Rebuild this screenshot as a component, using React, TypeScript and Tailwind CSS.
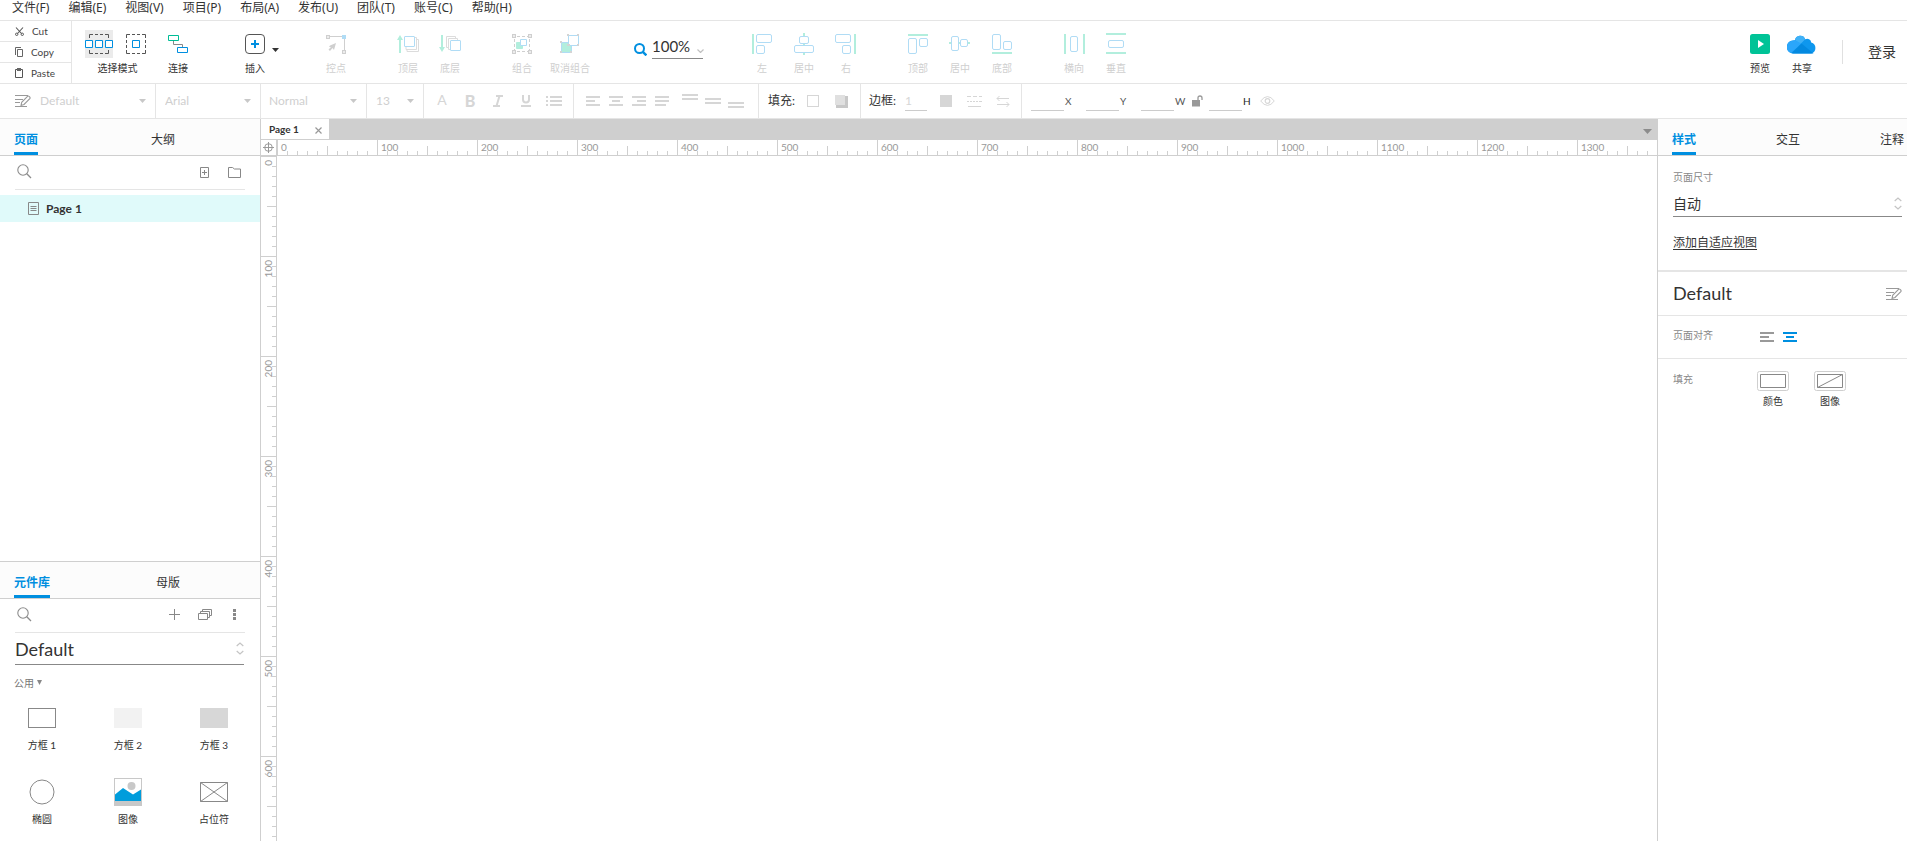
import { useState } from "react";
import type { ReactNode } from "react";

const menus = ["文件(F)", "编辑(E)", "视图(V)", "项目(P)", "布局(A)", "发布(U)", "团队(T)", "账号(C)", "帮助(H)"];

const range = (n: number) => Array.from({ length: n }, (_, i) => i);

function Icon({ w, h, className = "", children }: { w: number; h: number; className?: string; children: ReactNode }) {
  return (
    <svg width={w} height={h} viewBox={`0 0 ${w} ${h}`} fill="none" className={`shrink-0 ${className}`} aria-hidden="true">
      {children}
    </svg>
  );
}

/* ---------- shared icons ---------- */

function Caret({ className = "text-[#c8c8c8]" }: { className?: string }) {
  return (
    <Icon w={7} h={4} className={className}>
      <path d="M0 0h7L3.5 4z" fill="currentColor" />
    </Icon>
  );
}

function UpDown() {
  return (
    <Icon w={8} h={13} className="text-[#c4c4c4]">
      <path d="M.7 4 4 1l3.3 3M.7 9 4 12l3.3-3" stroke="currentColor" strokeWidth="1.2" />
    </Icon>
  );
}

function SearchIcon() {
  return (
    <Icon w={15} h={15} className="text-[#8c8c8c]">
      <circle cx="6" cy="6" r="5.2" stroke="currentColor" strokeWidth="1.1" />
      <path d="m9.8 9.8 4.2 4.2" stroke="currentColor" strokeWidth="1.3" />
    </Icon>
  );
}

function StyleIcon({ className }: { className: string }) {
  return (
    <Icon w={16} h={14} className={className}>
      <path d="M0 1.5h13M0 5.500h8M0 8.500h5M0 12.500h12" stroke="currentColor" />
      <path d="m6 11.500.7-3.200L12.500 2.400q.8-.7 1.600 0l.7.7q.6.8 0 1.600L9 10.500z" stroke="currentColor" strokeWidth="1.100" fill="#fff" />
    </Icon>
  );
}

function AlignIcon({ kind, className = "" }: { kind: "left" | "center" | "right" | "justify"; className?: string }) {
  const mid = { left: "M0 5h9", center: "M3 5h8", right: "M5 5h9", justify: "M0 5h14" }[kind];
  const last = kind === "justify" ? "M0 9h11" : "M0 9h14";
  return (
    <Icon w={14} h={10} className={className}>
      <path d={`M0 1h14${mid}${last}`} stroke="currentColor" strokeWidth="2" />
    </Icon>
  );
}

/* ---------- main toolbar ---------- */

function Tool({ label, wide = false, active = false, children }: { label: string; wide?: boolean; active?: boolean; children: ReactNode }) {
  return (
    <button type="button" className={`flex shrink-0 flex-col items-center gap-1 ${wide ? "w-[54px]" : "w-[42px]"} ${active ? "text-[#333]" : "text-[#cfcfcf]"}`}>
      <span className="flex h-7 items-center justify-center">{children}</span>
      <span className="text-[10px] leading-3 whitespace-nowrap">{label}</span>
    </button>
  );
}

const blue = "#b0dcf5";
const green = "#b2eedd";

function Handle({ x, y }: { x: number; y: number }) {
  return <rect x={x + 0.5} y={y + 0.5} width="3" height="3" stroke="#cfcfcf" fill="#ececec" />;
}

function ClipboardColumn() {
  const row = "flex h-[21px] items-center gap-2 pl-[15px] text-[10px] text-[#444] last:h-5";
  return (
    <div className="flex w-[72px] shrink-0 flex-col divide-y divide-[#e5e5e5] border-r border-[#e5e5e5]">
      <button type="button" className={row}>
        <Icon w={9} h={9}>
          <path d="m1 .5 5.500 6M8 .5 2.500 6.500" stroke="#555" strokeWidth="1.1" />
          <circle cx="1.700" cy="7.300" r="1.200" stroke="#555" />
          <circle cx="7.300" cy="7.300" r="1.200" stroke="#555" />
        </Icon>
        Cut
      </button>
      <button type="button" className={row}>
        <Icon w={8} h={10}>
          <path d="M2.500 2.500h5v7h-5zM.5 8V.5H6" stroke="#666" />
        </Icon>
        Copy
      </button>
      <button type="button" className={row}>
        <Icon w={8} h={10}>
          <path d="M.5 1.500h7v8h-7z" stroke="#555" />
          <path d="M2 0h4v3H2z" fill="#666" />
        </Icon>
        Paste
      </button>
    </div>
  );
}

function Toolbar() {
  return (
    <div className="flex shrink-0 border-b border-[#e5e5e5]">
      <ClipboardColumn />
      <div className="flex min-w-0 flex-1 items-start pt-[9px]">
        <div className="flex w-[85px] flex-col items-center gap-1 pl-[6px]">
          <div className="flex gap-[9px]">
            <button type="button" aria-label="相交选择" className="flex h-7 w-7 items-center justify-center bg-[#ebebeb]">
              <Icon w={28} h={28}>
                <path d="M4.500 8V4.500H8m2 0h3m2 0h3m2 0h3.500V8M4.500 20v3.500H8m2 0h3m2 0h3m2 0h3.500V20" stroke="#555" />
                <path d="M.5 10.500h7v7h-7zM10.500 10.500h7v7h-7zM20.500 10.500h7v7h-7z" stroke="#008fe0" fill="#fff" />
              </Icon>
            </button>
            <button type="button" aria-label="包含选择" className="flex h-7 w-7 items-center justify-center">
              <Icon w={20} h={20}>
                <path d="M.5 4V.5H4m2 0h3m2 0h3m2 0h3.500V4m0 2v3m0 2v3m0 2v3.500H16m-2 0h-3m-2 0H6m-2 0H.5V16m0-2v-3m0-2V6" stroke="#555" />
                <path d="M6.500 6.500h7v7h-7z" stroke="#008fe0" />
              </Icon>
            </button>
          </div>
          <span className="text-[10px] leading-3 text-[#333]">选择模式</span>
        </div>
        <Tool label="连接" active>
          <Icon w={20} h={20}>
            <path d="M5.500 7v3.500h9V13" stroke="#888" />
            <path d="M.5 1.500h10v5H.5z" stroke="#00bd96" />
            <path d="M9.500 13.500h10v5h-10z" stroke="#008fe0" />
          </Icon>
        </Tool>
        <div className="ml-[35px] flex w-[81px] text-[#333]">
          <Tool label="插入" active>
            <Icon w={20} h={20}>
              <rect x=".5" y=".5" width="19" height="19" rx="3.500" stroke="#555" />
              <path d="M10 6v8M6 10h8" stroke="#008fe0" strokeWidth="2" />
            </Icon>
          </Tool>
          <span className="-ml-1 pt-[18px]">
            <Caret className="text-[#333]" />
          </span>
        </div>
        <Tool label="控点">
          <Icon w={20} h={20}>
            <path d="M4 2.500h12M18.500 5v11" stroke="#cfcfcf" />
            <Handle x={0} y={1} />
            <path d="M16 1h4v4h-4z" fill={blue} />
            <Handle x={16} y={16} />
            <path d="m3 13 1-1.500L10 9 8 16l-1.500-2L4 17l-1.500-1.500L5 13z" fill="#cfcfcf" />
          </Icon>
        </Tool>
        <div className="ml-[30px] flex">
          <Tool label="顶层">
            <Icon w={22} h={20}>
              <path d="M3 19V4" stroke={green} strokeWidth="2" />
              <path d="M0 6 3 1l3 5z" fill={green} />
              <path d="M19 5.500h2.500v12H10V15M17 3.500h2.500v12H9V13" stroke="#dcdcdc" />
              <rect x="7.500" y="2.500" width="10" height="10" rx=".5" stroke={blue} fill="#fff" />
            </Icon>
          </Tool>
          <Tool label="底层">
            <Icon w={22} h={20}>
              <path d="M3 1v15" stroke={green} strokeWidth="2" />
              <path d="m0 13 3 5 3-5z" fill={green} />
              <path d="M9 13.500H7.500v-11h9V4M11 15.500H9.500v-11h9V6" stroke="#dcdcdc" />
              <rect x="11.500" y="6.500" width="10" height="10" rx=".5" stroke={blue} fill="#fff" />
            </Icon>
          </Tool>
        </div>
        <div className="ml-[30px] flex">
          <Tool label="组合">
            <Icon w={20} h={20}>
              <path d="M5 2.500h3m2 0h3m2 0h1M5 17.500h3m2 0h3m2 0h1M2.500 5v3m0 2v3m0 2v1M17.500 5v3m0 2v3m0 2v1" stroke="#cfcfcf" />
              <path d="M4.500 8.500h6v6h-6z" fill={green} stroke={green} />
              <path d="M8.500 5.500h6v6h-6z" fill="#fff" stroke={blue} />
              <Handle x={0} y={0} />
              <Handle x={16} y={0} />
              <Handle x={0} y={16} />
              <Handle x={16} y={16} />
            </Icon>
          </Tool>
          <Tool label="取消组合" wide>
            <Icon w={20} h={20}>
              <path d="M1.500 8.500h10v10h-10z" fill={green} stroke={blue} />
              <path d="M8.500 1.500h10v10h-10z" fill="#fff" stroke={blue} />
              <path d="M7 0h2v2H7zM17 0h2v2h-2zM17 10h2v2h-2zM7 10h3v2H7zM0 7h2v2H0zM0 17h2v2H0zM10 17h2v2h-2z" fill="#d4d4d4" />
            </Icon>
          </Tool>
        </div>
        <div className="ml-[37px] flex w-[107px] items-end gap-[5px] pt-[5px]">
          <Icon w={13} h={13} className="mb-[3px]">
            <circle cx="5.500" cy="5.500" r="4.500" stroke="#008fe0" strokeWidth="2" />
            <path d="m8.800 8.800 3.600 3.600" stroke="#008fe0" strokeWidth="2.400" />
          </Icon>
          <label className="flex h-6 w-[51px] items-center border-b border-[#888]">
            <input aria-label="缩放" defaultValue="100%" className="h-5 w-[45px] bg-transparent text-[15px] text-[#333] outline-none" />
            <Icon w={7} h={4} className="mt-2">
              <path d="m.5.5 3 3 3-3" stroke="#c0c0c0" strokeWidth="1.200" />
            </Icon>
          </label>
        </div>
        <div className="flex">
          <Tool label="左">
            <Icon w={20} h={20}>
              <path d="M1 0v20" stroke={green} strokeWidth="2" />
              <rect x="4.500" y=".5" width="15" height="8" rx="1.500" stroke={blue} />
              <rect x="4.500" y="11.500" width="8" height="8" rx="1.500" stroke={blue} />
            </Icon>
          </Tool>
          <Tool label="居中">
            <Icon w={20} h={22}>
              <path d="M10 0v3m0 7v2m0 8v2" stroke={green} strokeWidth="2" />
              <rect x="5.500" y="3.500" width="9" height="7" rx="1.500" stroke={blue} />
              <rect x=".5" y="12.500" width="19" height="7" rx="1.500" stroke={blue} />
            </Icon>
          </Tool>
          <Tool label="右">
            <Icon w={22} h={20}>
              <path d="M20 0v20" stroke={green} strokeWidth="2" />
              <rect x=".5" y=".5" width="15" height="8" rx="1.500" stroke={blue} />
              <rect x="7.500" y="11.500" width="8" height="8" rx="1.500" stroke={blue} />
            </Icon>
          </Tool>
        </div>
        <div className="ml-[30px] flex">
          <Tool label="顶部">
            <Icon w={20} h={20}>
              <path d="M0 1h20" stroke={green} strokeWidth="2" />
              <rect x=".5" y="4.500" width="8" height="15" rx="1.500" stroke={blue} />
              <rect x="11.500" y="4.500" width="8" height="8" rx="1.500" stroke={blue} />
            </Icon>
          </Tool>
          <Tool label="居中">
            <Icon w={22} h={20}>
              <path d="M0 9h3m7 0h2m7 0h2" stroke={green} strokeWidth="2" />
              <rect x="2.500" y="2.500" width="7" height="14" rx="1.500" stroke={blue} />
              <rect x="11.500" y="5.500" width="7" height="7" rx="1.500" stroke={blue} />
            </Icon>
          </Tool>
          <Tool label="底部">
            <Icon w={20} h={20}>
              <path d="M0 19h20" stroke={green} strokeWidth="2" />
              <rect x=".5" y=".5" width="8" height="15" rx="1.500" stroke={blue} />
              <rect x="11.500" y="7.500" width="8" height="8" rx="1.500" stroke={blue} />
            </Icon>
          </Tool>
        </div>
        <div className="ml-[30px] flex">
          <Tool label="横向">
            <Icon w={21} h={20}>
              <path d="M1 0v20M20 0v20" stroke={green} strokeWidth="2" />
              <rect x="6.500" y="2.500" width="7" height="15" rx="1.500" stroke={blue} />
            </Icon>
          </Tool>
          <Tool label="垂直">
            <Icon w={20} h={22}>
              <path d="M0 1h20M0 20h20" stroke={green} strokeWidth="2" />
              <rect x="2.500" y="7.500" width="15" height="7" rx="1.500" stroke={blue} />
            </Icon>
          </Tool>
        </div>
        <div className="ml-auto flex pr-[11px]">
          <Tool label="预览" active>
            <Icon w={20} h={20}>
              <rect width="20" height="20" rx="2.500" fill="#00c397" />
              <path d="M8 6v8l6-4z" fill="#fff" />
            </Icon>
          </Tool>
          <Tool label="共享" active>
            <Icon w={30} h={20}>
              <path d="M6.500 19.500a6.500 6.500 0 0 1-.5-13 3 3 0 0 1 2-.3 5.300 5.300 0 0 1 10.200-.9 4 4 0 0 1 6 3.200 5.700 5.700 0 0 1 0 11z" fill="#0e97ee" />
              <path d="M8 6.200a5.300 5.300 0 0 1 10.200-.9L13.500 10z" fill="#3fb1f7" />
              <path d="M6 6.500 8 6.200 14.500 9.500 4 19a6.500 6.500 0 0 1 2-12.500z" fill="#2ba6fa" />
              <path d="M4.500 19.200 14.500 9.500l12 10H6z" fill="#0389e0" />
            </Icon>
          </Tool>
          <div className="mt-[10px] mr-[25px] ml-[19px] h-6 w-px bg-[#e0e0e0]" />
          <button type="button" className="h-[42px] text-[14px] text-[#333]">登录</button>
        </div>
      </div>
    </div>
  );
}

/* ---------- format bar ---------- */

function FormatSelect({ label, value, className }: { label: string; value: string; className: string }) {
  return (
    <div className={`flex items-center border-r border-[#e5e5e5] pr-[9px] ${className}`}>
      <select aria-label={label} defaultValue={value} className="min-w-0 flex-1 appearance-none bg-transparent text-[12px] text-[#cfcfcf] outline-none">
        <option>{value}</option>
      </select>
      <Caret />
    </div>
  );
}

function Coord({ label, className = "text-[#555]" }: { label: string; className?: string }) {
  return (
    <label className={`flex items-center gap-px text-[10px] ${className}`}>
      <input aria-label={label} className="mt-px h-[18px] w-[33px] border-b border-[#ccc] bg-transparent outline-none" />
      {label}
    </label>
  );
}

function FormatBar() {
  const glyph = "flex h-5 w-7 items-center justify-center leading-5";
  return (
    <div className="flex h-[35px] shrink-0 items-stretch overflow-hidden border-b border-[#e5e5e5] text-[#d6d6d6]">
      <div className="flex items-center pl-[15px]">
        <button type="button" aria-label="样式管理">
          <StyleIcon className="text-[#999]" />
        </button>
      </div>
      <FormatSelect label="样式" value="Default" className="w-[125px] pl-[9px]" />
      <FormatSelect label="字体" value="Arial" className="w-[105px] pl-[9px]" />
      <FormatSelect label="字重" value="Normal" className="w-[106px] pl-2" />
      <FormatSelect label="字号" value="13" className="w-[57px] pl-[9px]" />
      <div className="flex w-[150px] items-center border-r border-[#e5e5e5] pl-1">
        <button type="button" aria-label="文字颜色" className={`${glyph} pb-[3px] text-[14px]`}>A</button>
        <button type="button" aria-label="粗体" className={`${glyph} text-[16px] font-black`}>B</button>
        <button type="button" aria-label="斜体" className={glyph}>
          <Icon w={10} h={12}>
            <path d="M3 1h7M0 11h7M6.500 1l-3 10" stroke="currentColor" strokeWidth="2" />
          </Icon>
        </button>
        <button type="button" aria-label="下划线" className={glyph}>
          <Icon w={10} h={12}>
            <path d="M2 0v4.500q0 3 3 3t3-3V0" stroke="currentColor" strokeWidth="2" />
            <path d="M0 11h10" stroke="currentColor" strokeWidth="2" />
          </Icon>
        </button>
        <button type="button" aria-label="项目符号" className={glyph}>
          <Icon w={16} h={12}>
            <path d="M0 2h2M4 2h12M0 6h2M4 6h12M0 10h2M4 10h12" stroke="currentColor" strokeWidth="2" />
          </Icon>
        </button>
      </div>
      <div className="flex w-[185px] items-center gap-[9px] border-r border-[#e5e5e5] pl-3">
        <button type="button" aria-label="左对齐"><AlignIcon kind="left" /></button>
        <button type="button" aria-label="居中对齐"><AlignIcon kind="center" /></button>
        <button type="button" aria-label="右对齐"><AlignIcon kind="right" /></button>
        <button type="button" aria-label="两端对齐"><AlignIcon kind="justify" /></button>
        <div className="ml-1 flex gap-[7px]">
          <button type="button" aria-label="顶部对齐">
            <Icon w={16} h={14}><path d="M0 1h16M0 5h16" stroke="currentColor" strokeWidth="2" /></Icon>
          </button>
          <button type="button" aria-label="垂直居中">
            <Icon w={16} h={14}><path d="M0 5h16M0 9h16" stroke="currentColor" strokeWidth="2" /></Icon>
          </button>
          <button type="button" aria-label="底部对齐">
            <Icon w={16} h={14}><path d="M0 9h16M0 13h16" stroke="currentColor" strokeWidth="2" /></Icon>
          </button>
        </div>
      </div>
      <div className="flex w-[102px] items-center border-r border-[#e5e5e5] pl-[9px]">
        <span className="w-[39px] text-[12px] text-[#333]">填充:</span>
        <button type="button" aria-label="填充颜色" className="h-3 w-3 border border-[#d6d6d6]" />
        <button type="button" aria-label="阴影" className="ml-4">
          <Icon w={13} h={13}>
            <path d="M1 1h12v12H1z" fill="#c8c8c8" />
            <path d="M0 0h10v10H0z" fill="#e0e0e0" />
          </Icon>
        </button>
      </div>
      <div className="flex w-[161px] items-center border-r border-[#e5e5e5] pl-2">
        <span className="w-9 text-[12px] text-[#333]">边框:</span>
        <input aria-label="边框宽度" defaultValue="1" className="mt-px h-[18px] w-[22px] border-b border-[#ccc] bg-transparent text-[12px] outline-none" />
        <button type="button" aria-label="边框颜色" className="ml-[13px] h-3 w-3 bg-[#d6d6d6]" />
        <button type="button" aria-label="线型" className="ml-[15px]">
          <Icon w={15} h={12}>
            <path d="M0 1.500h4m2 0h4m2 0h3M0 6.500h2m1 0h2m1 0h2m1 0h2m1 0h3M1 11.500h13" stroke="currentColor" />
          </Icon>
        </button>
        <button type="button" aria-label="箭头" className="ml-[14px]">
          <Icon w={14} h={12}>
            <path d="M1 3.500h12M3.500 1 1 3.500 3.500 6M1 9.500h12M10.500 7 13 9.500 10.500 12" stroke="currentColor" />
          </Icon>
        </button>
      </div>
      <div className="flex items-center pl-[9px]">
        <div className="w-[55px]"><Coord label="X" /></div>
        <div className="w-[55px]"><Coord label="Y" /></div>
        <div className="w-[51px]"><Coord label="W" /></div>
        <button type="button" aria-label="锁定宽高比">
          <Icon w={11} h={12}>
            <path d="M0 5h8v6.500H0z" fill="#999" />
            <path d="M6 5V3q0-2 2-2t2 2v2" stroke="#999" strokeWidth="1.300" />
          </Icon>
        </button>
        <div className="ml-[6px] w-[51px]"><Coord label="H" className="text-[#222]" /></div>
        <button type="button" aria-label="可见性">
          <Icon w={15} h={10}>
            <path d="M.7 5Q4 .6 7.500.6T14.300 5Q11 9.400 7.500 9.400T.7 5z" stroke="currentColor" />
            <circle cx="7.500" cy="5" r="2.300" stroke="currentColor" strokeWidth="1.200" />
          </Icon>
        </button>
      </div>
    </div>
  );
}

/* ---------- panels ---------- */

function Tabs({ tabs, className }: { tabs: string[]; className: string }) {
  const [current, setCurrent] = useState(tabs[0]);
  return (
    <div role="tablist" className={`flex h-[37px] shrink-0 items-end overflow-hidden border-b border-[#cfcfcf] bg-[#fcfcfc] pl-[14px] text-[12px] ${className}`}>
      {tabs.map((tab) => (
        <button
          key={tab}
          type="button"
          role="tab"
          aria-selected={tab === current}
          onClick={() => setCurrent(tab)}
          className={`shrink-0 border-b-[3px] pb-[3px] leading-[18px] ${tab === current ? "border-[#008fe0] font-bold text-[#008fe0]" : "border-transparent text-[#333]"}`}>
          {tab}
        </button>
      ))}
    </div>
  );
}

function PagesPanel() {
  return (
    <section className="flex min-h-0 flex-1 flex-col">
      <Tabs tabs={["页面", "大纲"]} className="gap-[113px]" />
      <div className="mx-[15px] flex h-[34px] items-center border-b border-[#e5e5e5] pr-1 pl-[2px]">
        <button type="button" aria-label="搜索页面" className="pb-[2px]"><SearchIcon /></button>
        <button type="button" aria-label="添加页面" className="mr-[19px] ml-auto pb-px">
          <Icon w={9} h={11}>
            <path d="M.5.5h8v10h-8zM4.500 3v5M2 5.500h5" stroke="#888" />
          </Icon>
        </button>
        <button type="button" aria-label="添加文件夹" className="pb-px">
          <Icon w={13} h={11}>
            <path d="M.5 10.500V.5h4l2 1.500h6v8.500z" stroke="#888" />
          </Icon>
        </button>
      </div>
      <ul className="pt-[5px]">
        <li className="flex h-[27px] items-center gap-[7px] bg-[#e0fafa] pl-7 text-[12px] font-bold text-[#333]">
          <Icon w={11} h={13}>
            <path d="M.5.5h10v12H.5zM2.500 4.500h6M2.500 6.500h6M2.500 8.500h6" stroke="#888" />
          </Icon>
          Page 1
        </li>
      </ul>
    </section>
  );
}

const widgets = [
  { name: "方框 1", art: <rect x=".5" y=".5" width="27" height="19" stroke="#888" />, h: 20 },
  { name: "方框 2", art: <rect width="28" height="20" fill="#f2f2f2" />, h: 20 },
  { name: "方框 3", art: <rect width="28" height="20" fill="#d7d7d7" />, h: 20 },
  { name: "椭圆", art: <circle cx="14" cy="14" r="12" stroke="#888" />, h: 28 },
  {
    name: "图像",
    art: (
      <>
        <rect x=".5" y=".5" width="27" height="27" stroke="#c8c8c8" fill="#fff" />
        <path d="M0 23h28v5H0z" fill="#c8c8c8" />
        <circle cx="17.500" cy="8" r="4" fill="#c8c8c8" />
        <path d="M1 16.500 9 10l10 6.500 8-5V23H1z" fill="#009ddc" />
      </>
    ),
    h: 28,
  },
  { name: "占位符", art: <path d="M.5.5h27v19H.5zM.5.5l27 19M27.500.5l-27 19" stroke="#888" />, h: 20 },
];

function LibraryPanel() {
  return (
    <section className="flex h-[280px] shrink-0 flex-col border-t border-[#cfcfcf]">
      <Tabs tabs={["元件库", "母版"]} className="gap-[106px]" />
      <div className="mx-[15px] flex h-[34px] shrink-0 items-center border-b border-[#e5e5e5] pr-[9px] pb-[2px] pl-[2px]">
        <button type="button" aria-label="搜索元件"><SearchIcon /></button>
        <button type="button" aria-label="添加元件库" className="ml-auto">
          <Icon w={11} h={11}>
            <path d="M5.500 0v11M0 5.500h11" stroke="#888" />
          </Icon>
        </button>
        <button type="button" aria-label="元件库管理" className="ml-[18px]">
          <Icon w={14} h={11}>
            <path d="M.5 4.500h9v6h-9zM2.500 4V2.500h9v6H10M4.500 2V.5h9v6H12" stroke="#888" />
          </Icon>
        </button>
        <button type="button" aria-label="更多" className="ml-[21px]">
          <Icon w={3} h={11}>
            <path d="M0 0h3v3H0zM0 4h3v3H0zM0 8h3v3H0z" fill="#888" />
          </Icon>
        </button>
      </div>
      <div className="mr-4 ml-[15px] flex h-8 shrink-0 items-center border-b border-[#888]">
        <select aria-label="元件库" defaultValue="Default" className="flex-1 appearance-none bg-transparent text-[18px] leading-6 text-[#333] outline-none">
          <option>Default</option>
        </select>
        <UpDown />
      </div>
      <button type="button" className="mt-[10px] flex items-center gap-[3px] self-start pl-[14px] text-[10px] leading-4 text-[#777]">
        公用
        <Icon w={5} h={5} className="mb-[2px]">
          <path d="M0 0h5L2.500 5z" fill="#888" />
        </Icon>
      </button>
      <div className="mt-[13px] grid w-[258px] grid-cols-3">
        {widgets.map((w) => (
          <button key={w.name} type="button" className="flex h-[74px] flex-col items-center pr-[2px] text-[10px] leading-4 text-[#333]">
            <span className="flex h-7 items-center">
              <Icon w={28} h={w.h}>{w.art}</Icon>
            </span>
            <span className="mt-[5px]">{w.name}</span>
          </button>
        ))}
      </div>
    </section>
  );
}

function HorizontalRuler() {
  return (
    <div className="flex h-[15px] min-w-0 flex-1 overflow-hidden">
      {range(14).map((n) => (
        <div key={n} className="relative w-[100px] shrink-0 border-l border-[#cfcfcf] pl-[3px] text-[10px] leading-[15px] text-[#999]">
          {n * 100}
          <svg width="100" height="15" className="absolute top-0 -left-px" shapeRendering="crispEdges" aria-hidden="true">
            {range(9).map((i) => (
              <rect key={i} x={(i + 1) * 10} y={i === 4 ? 6 : 11} width="1" height="9" fill="#cfcfcf" />
            ))}
          </svg>
        </div>
      ))}
    </div>
  );
}

function VerticalRuler() {
  return (
    <div className="flex w-4 shrink-0 flex-col overflow-hidden border-r border-[#cfcfcf]">
      {range(7).map((n) => (
        <div key={n} className="relative h-[100px] shrink-0 border-t border-[#cfcfcf] pt-[3px] text-[10px] leading-[15px] text-[#999]">
          <span className="block rotate-180 [writing-mode:vertical-rl]">{n * 100}</span>
          <svg width="15" height="100" className="absolute -top-px left-0" shapeRendering="crispEdges" aria-hidden="true">
            {range(9).map((i) => (
              <rect key={i} x={i === 4 ? 6 : 11} y={(i + 1) * 10} width="9" height="1" fill="#cfcfcf" />
            ))}
          </svg>
        </div>
      ))}
    </div>
  );
}

function Canvas() {
  return (
    <main className="flex min-w-0 flex-1 flex-col">
      <div className="flex h-[21px] shrink-0 items-stretch border-b border-[#cfcfcf] bg-[#cfcfcf]">
        <div className="flex w-[68px] items-center bg-white pl-2 text-[10px] font-bold text-[#333]">
          Page 1
          <button type="button" aria-label="关闭" className="ml-auto pt-[2px] pr-[7px]">
            <Icon w={7} h={7}>
              <path d="m.5.5 6 6M6.500.5l-6 6" stroke="#999" strokeWidth="1.200" />
            </Icon>
          </button>
        </div>
        <button type="button" aria-label="页面列表" className="ml-auto pt-1 pr-[5px]">
          <Icon w={9} h={5}>
            <path d="M0 0h9L4.500 5z" fill="#8c8c8c" />
          </Icon>
        </button>
      </div>
      <div className="flex shrink-0 border-b border-[#cfcfcf]">
        <div className="flex h-[15px] w-4 shrink-0 items-center justify-center border-r border-[#cfcfcf]">
          <Icon w={11} h={11}>
            <circle cx="5.500" cy="5.500" r="3.800" stroke="#999" />
            <path d="M5.500 0v11M0 5.500h11" stroke="#999" />
          </Icon>
        </div>
        <HorizontalRuler />
      </div>
      <div className="flex min-h-0 flex-1">
        <VerticalRuler />
        <div className="flex-1 bg-white" />
      </div>
    </main>
  );
}

function FillButton({ label, image = false }: { label: string; image?: boolean }) {
  return (
    <button type="button" className="flex flex-col items-center gap-[2px] text-[10px] leading-4 text-[#333]">
      <Icon w={32} h={20}>
        <rect x=".5" y=".5" width="31" height="19" rx="2" stroke="#cfcfcf" />
        <path d={image ? "M3.500 3.500h25v13h-25zM3.500 16.500l25-13" : "M3.500 3.500h25v13h-25z"} stroke="#888" />
      </Icon>
      {label}
    </button>
  );
}

function StylePanel() {
  return (
    <aside className="flex w-[250px] shrink-0 flex-col border-l border-[#cfcfcf]">
      <Tabs tabs={["样式", "交互", "注释"]} className="gap-20" />
      <div className="border-b-2 border-[#e5e5e5] pt-[13px] pr-[5px] pb-[18px] pl-[15px]">
        <label htmlFor="page-size" className="block text-[10px] leading-4 text-[#888]">页面尺寸</label>
        <div className="mt-[6px] flex h-[26px] items-center border-b border-[#888]">
          <select id="page-size" defaultValue="自动" className="flex-1 appearance-none bg-transparent text-[14px] text-[#333] outline-none">
            <option>自动</option>
          </select>
          <UpDown />
        </div>
        <a href="#adaptive" className="mt-[17px] block text-[12px] leading-[18px] text-[#333] underline underline-offset-2">添加自适应视图</a>
      </div>
      <div className="flex h-11 items-center justify-between border-b border-[#e5e5e5] pr-[5px] pl-[15px]">
        <h2 className="text-[18px] text-[#333]">Default</h2>
        <button type="button" aria-label="样式管理"><StyleIcon className="text-[#999]" /></button>
      </div>
      <div className="flex h-[43px] items-center border-b border-[#e5e5e5] pl-[15px]">
        <span className="w-[87px] pb-1 text-[10px] text-[#888]">页面对齐</span>
        <button type="button" aria-label="靠左"><AlignIcon kind="left" className="text-[#999]" /></button>
        <button type="button" aria-label="居中" className="ml-[9px]"><AlignIcon kind="center" className="text-[#008fe0]" /></button>
      </div>
      <div className="flex items-start pt-3 pl-[15px]">
        <span className="w-[84px] text-[10px] leading-4 text-[#888]">填充</span>
        <div className="flex gap-[25px]">
          <FillButton label="颜色" />
          <FillButton label="图像" image />
        </div>
      </div>
    </aside>
  );
}

export default function App() {
  return (
    <div className="flex h-screen flex-col overflow-hidden bg-white font-[Lato,'Noto_Sans_CJK_SC',sans-serif] text-[#333]">
      <nav className="flex h-[21px] shrink-0 items-start gap-[19px] border-b border-[#e5e5e5] pl-3 font-['Noto_Sans','Noto_Sans_CJK_SC',sans-serif] text-[12px] leading-4">
        {menus.map((m) => (
          <button key={m} type="button">{m}</button>
        ))}
      </nav>
      <Toolbar />
      <FormatBar />
      <div className="flex min-h-0 flex-1">
        <aside className="flex w-[261px] shrink-0 flex-col border-r border-[#cfcfcf]">
          <PagesPanel />
          <LibraryPanel />
        </aside>
        <Canvas />
        <StylePanel />
      </div>
    </div>
  );
}
